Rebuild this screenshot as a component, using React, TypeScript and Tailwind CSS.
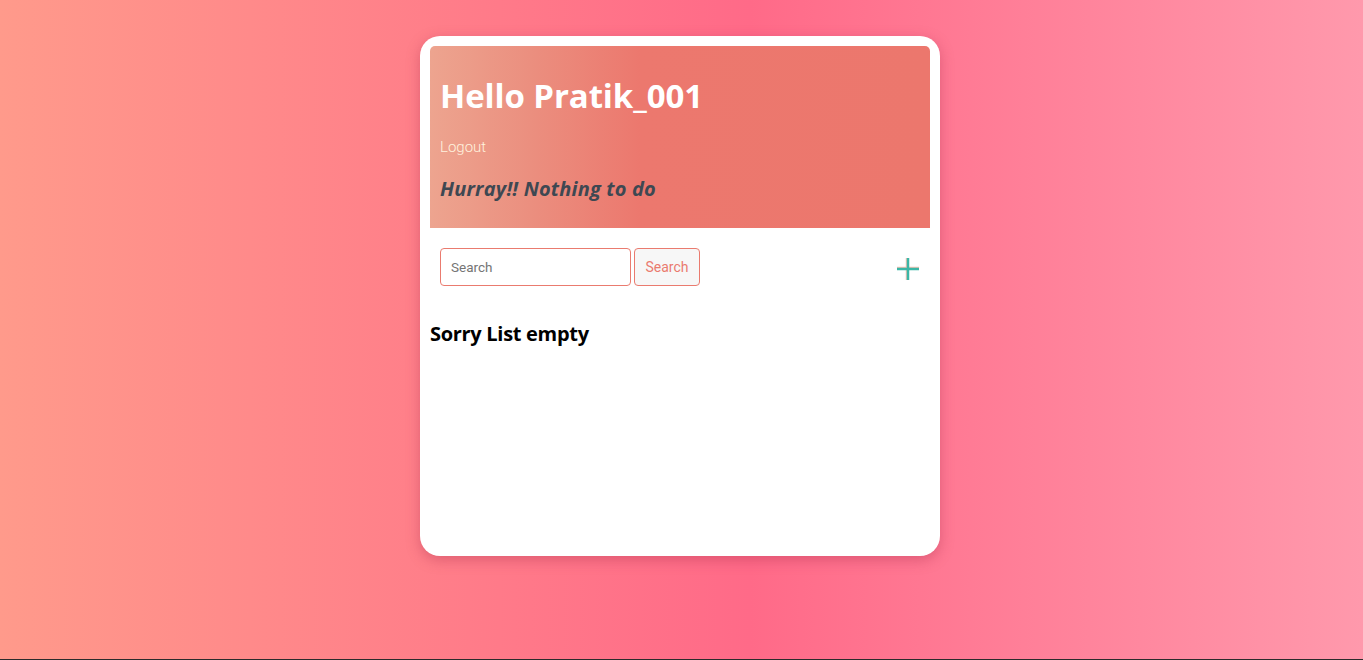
export default function App() {
  return (
    <div className="min-h-[660px] w-full bg-[#2b2b2b]">
      <div className="h-[659px] w-full bg-[linear-gradient(90deg,#ff9a8b_0%,#ff6a88_55%,#ff99ac_100%)] pt-9">
        <div className="flex w-[1360px] justify-center">
          <div className="h-[520px] w-[520px] rounded-[20px] bg-white p-[10px] shadow-[0_4px_14px_rgba(160,40,70,0.35)]">
            {/* Header */}
            <div className="h-[182px] rounded-t-[5px] bg-[linear-gradient(90deg,#eda48f_0%,#eb8f7f_20%,#ec786e_42%,#ec776d_100%)] px-[10px] pt-[30px]">
              <h1 className="font-['Open_Sans'] text-[33px] leading-[40px] font-bold tracking-[-0.1px] text-white">
                Hello Pratik_001
              </h1>
              <a className="mt-[21px] block font-['Roboto'] text-[15px] leading-[20px] font-light text-[#fff2de]">
                Logout
              </a>
              <p className="mt-[20px] font-['Open_Sans'] text-[20px] leading-[24px] font-bold italic tracking-[0.2px] text-[#3e4852]">
                Hurray!! Nothing to do
              </p>
            </div>

            {/* Search row */}
            <div className="flex items-center px-[10px] pt-[20px]">
              <input
                placeholder="Search"
                className="h-[38px] w-[191px] rounded-[4px] border border-[#ea7b6f] bg-white px-[10px] font-['Roboto'] text-[13.5px] text-[#555] placeholder:text-[#757575] outline-none"
              />
              <button className="ml-[3px] h-[38px] w-[66px] rounded-[4px] border border-[#ea7b6f] bg-[#f7f7f7] font-['Roboto'] text-[14px] text-[#ea7b6f]">
                Search
              </button>
              <div className="ml-auto mr-0 mt-[4px]">
                <svg width="24" height="24" viewBox="0 0 24 24">
                  <g stroke="#f6c2b4" strokeWidth="2.5">
                    <line x1="11" y1="1" x2="11" y2="23" />
                    <line x1="1" y1="11" x2="23" y2="11" />
                  </g>
                  <g stroke="#3bb6a6" strokeWidth="2.5">
                    <line x1="12" y1="1" x2="12" y2="23" />
                    <line x1="1" y1="12" x2="23" y2="12" />
                  </g>
                </svg>
              </div>
            </div>

            <h2 className="mt-[36px] font-['Open_Sans'] text-[20px] leading-[24px] font-bold tracking-[-0.3px] text-black">
              Sorry List empty
            </h2>
          </div>
        </div>
      </div>
    </div>
  );
}
